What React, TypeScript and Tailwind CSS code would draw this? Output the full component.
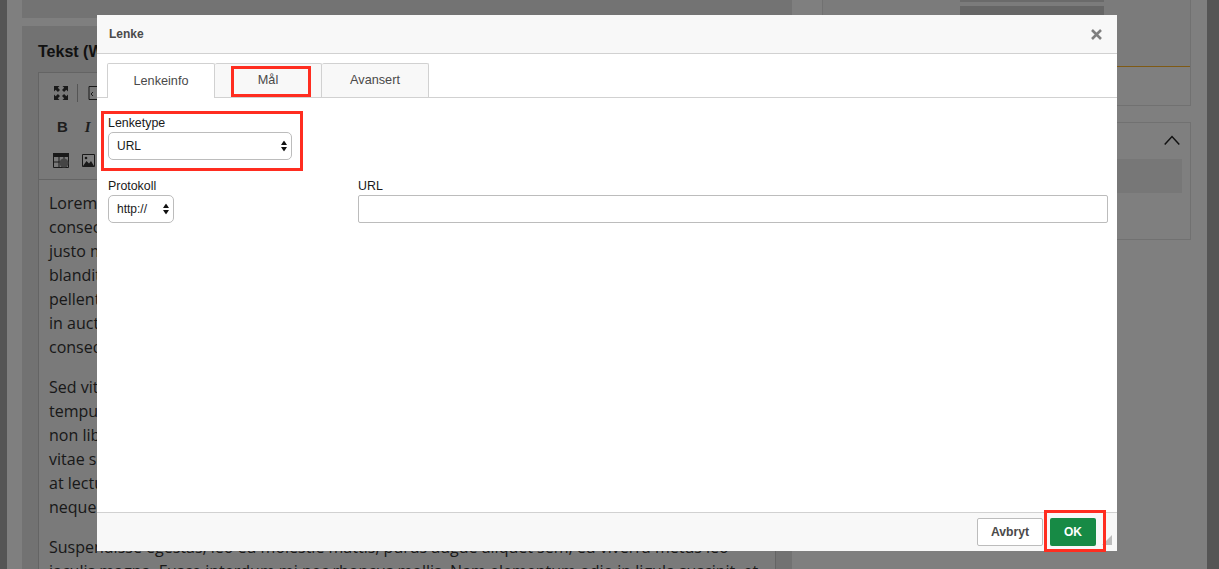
const dialogFont = "font-['Liberation_Sans',Arial,sans-serif]";

function Updown() {
  return (
    <svg width="6" height="11" viewBox="0 0 6 11" className="absolute right-[4px] top-1/2 -translate-y-1/2" fill="#111">
      <path d="M3 0 L6 4.5 H0 Z" />
      <path d="M3 11 L6 6.5 H0 Z" />
    </svg>
  );
}

function SelectBox({ text, className }: { text: string; className: string }) {
  return (
    <div className={`relative h-[28px] bg-white border border-[#bcbcbc] rounded-[5px] flex items-center pl-[8px] text-[12px] text-[#1a1a1a] pr-[8px] ${className}`}>
      {text}
      <Updown />
    </div>
  );
}

export default function App() {
  return (
    <div className="relative w-[1219px] h-[569px] overflow-hidden bg-white flex">
      <div className="w-[7px] h-full bg-[#aaaaaa]" />
      <div className="flex-1 min-w-0 pl-[15px] flex gap-[30px]">
        <div className="w-[770px] shrink-0 flex flex-col">
          <div className="h-[18px] bg-[#e6e6e6] shrink-0" />
          <div className="mt-[8px] flex-1 bg-[#e4e4e4] pl-[16px] pr-[16px] pt-[16px] min-h-0">
            <h2 className={`text-[16px] font-bold leading-[20px] text-[#222] ${dialogFont}`}>Tekst (WYSIWYG)</h2>
            <div className="mt-[10px] border border-[#c8c8c8] bg-[#f4f4f4] h-[600px]">
              <div className="h-[107px] bg-[#f2f2f2] border-b border-[#c8c8c8] pl-[15px] pt-[13px]">
                <div className="flex items-center h-[14px]">
                  <svg width="14" height="14" viewBox="0 0 14 14" fill="#333">
                    <path d="M0 0h5.5L3.8 1.7 6 3.9 3.9 6 1.7 3.8 0 5.5zM14 0v5.5l-1.7-1.7L10.1 6 8 3.9l2.2-2.2L8.5 0zM14 14H8.5l1.7-1.7L8 10.1 10.1 8l2.2 2.2 1.7-1.7zM0 14V8.5l1.7 1.7L3.9 8 6 10.1l-2.2 2.2L5.5 14z" />
                  </svg>
                  <span className="ml-[9px] w-px h-[18px] bg-[#aaa]" />
                  <svg width="14" height="14" viewBox="0 0 14 14" fill="none" stroke="#333" className="ml-[10px]">
                    <path d="M1 .5h8l4 4v9H1z" />
                    <path d="M5 6L3 8l2 2M9 6l2 2-2 2" />
                  </svg>
                </div>
                <div className="mt-[20px] flex items-center h-[14px] text-[#3c3c3c] font-['Liberation_Sans',sans-serif] text-[15px] font-bold">
                  <span className="ml-[3px]">B</span>
                  <span className="ml-[17px] font-['Liberation_Serif',serif] italic">I</span>
                </div>
                <div className="mt-[19px] flex items-start">
                  <svg width="16" height="15" viewBox="0 0 16 15" className="-ml-[1px]">
                    <rect x="0" y="0" width="16" height="4" fill="#333" />
                    <path d="M.5 4v10.5h15V4M.5 9h15M6 4v10.5M11 4v10.5" fill="none" stroke="#333" />
                    <circle cx="11" cy="10" r="4.5" fill="#8a8a8a" />
                  </svg>
                  <svg width="13" height="13" viewBox="0 0 13 13" className="ml-[13px] mt-[1px]">
                    <path d="M.5.5h12v12H.5z" fill="#fff" stroke="#333" />
                    <path d="M1 12l3.5-5 2.5 2.5L9 7l3 5z" fill="#333" />
                    <circle cx="4" cy="4" r="1.3" fill="#333" />
                  </svg>
                </div>
              </div>
              <div className="pl-[10px] pr-[12px] pt-[11px] font-['Open_Sans',sans-serif] text-[16px] leading-[24px] text-[#333]">
                <p className="mb-[8px]">Lorem ipsum dolor sit amet,<br />consectetur neque.<br />justo mauris.<br />blandit nulla.<br />pellentesque habitant.<br />in auctor fames.<br />consequat mattis.</p>
                <p className="mb-[8px] pt-[8px]">Sed vitae nibh.<br />tempus lorem.<br />non libero.<br />vitae sem.<br />at lectus.<br />neque porttitor.</p>
                <p className="pt-[8px]">Suspendisse egestas, leo eu molestie mattis, purus augue aliquet sem, eu viverra metus leo<br />iaculis magna. Fusce interdum mi nec rhoncus mollis. Nam elementum odio in ligula suscipit, et</p>
              </div>
            </div>
          </div>
        </div>
        <div className="w-[369px] shrink-0 flex flex-col">
          <div className="h-[106px] border border-[#e2e2e2] border-t-0 flex flex-col">
            <div className="flex-1 bg-[#f6f6f6] border-b border-[#ffb428] pl-[137px]">
              <div className="w-[144px] h-[2px] bg-[#d4d4d4]" />
              <div className="w-[144px] h-[9px] mt-[4px] bg-[#cccccc]" />
            </div>
            <div className="h-[38px]" />
          </div>
          <div className="mt-[16px] h-[118px] border border-[#e2e2e2] px-[8px] pt-[36px] relative">
            <svg width="16" height="10" viewBox="0 0 16 10" className="absolute right-[10px] top-[12px]" fill="none" stroke="#222" strokeWidth="1.5"><path d="M.7 9.5L8 1.5l7.3 8" /></svg>
            <div className="h-[34px] bg-[#eeeeee]" />
          </div>
        </div>
      </div>
      <div className="w-[12px] h-full bg-[#aaaaaa] shrink-0" />

      <div className="absolute inset-0 bg-black/50" />

      <div className={`absolute left-[97px] top-[15px] w-[1020px] h-[536px] bg-white flex flex-col ${dialogFont}`}>
        <div className="h-[39px] shrink-0 bg-[#f8f8f8] border-b border-[#d1d1d1] flex items-center justify-between pl-[12px] pr-[15px]">
          <span className="text-[12px] font-bold text-[#4a4a4a]">Lenke</span>
          <svg width="11" height="11" viewBox="0 0 11 11" stroke="#7f7f7f" strokeWidth="2.6"><path d="M1 1l9 9M10 1l-9 9" /></svg>
        </div>
        <div className="h-[44px] shrink-0 border-b border-[#d1d1d1] pl-[10px] pt-[9px] flex text-[12.7px] text-[#4a4a4a]">
          <div className="w-[108px] h-[35px] pt-[1px] bg-white border border-[#d1d1d1] border-b-0 rounded-t-[2px] flex items-center justify-center relative z-10">Lenkeinfo</div>
          <div className="w-[107px] h-[34px] pt-[1px] bg-[#f8f8f8] border border-[#d1d1d1] border-b-0 border-l-0 rounded-t-[2px] flex items-center justify-center relative">
            Mål
            <span className="absolute left-[16px] top-[2px] w-[80px] h-[31px] border-[3px] border-[#ff2d20]" />
          </div>
          <div className="w-[107px] h-[34px] pt-[1px] bg-[#f8f8f8] border border-[#d1d1d1] border-b-0 border-l-0 rounded-t-[2px] flex items-center justify-center">Avansert</div>
        </div>
        <div className="flex-1 pt-[17px] pl-[11px] pr-[9px] text-[12.4px] text-[#1a1a1a]">
          <div className="relative w-[184px]">
            <span className="absolute left-[-7px] top-[-4px] w-[202px] h-[60px] border-[3px] border-[#ff2d20] pointer-events-none" />
            <div className="leading-[16px]">Lenketype</div>
            <SelectBox text="URL" className="w-[184px] mt-[1px]" />
          </div>
          <div className="mt-[18px] flex gap-[184px]">
            <div className="w-[66px]">
              <div className="leading-[16px]">Protokoll</div>
              <SelectBox text="http://" className="w-[66px] mt-[1px]" />
            </div>
            <div className="flex-1">
              <div className="leading-[16px]">URL</div>
              <div className="h-[28px] mt-[1px] bg-white border border-[#bcbcbc] rounded-[2px]" />
            </div>
          </div>
        </div>
        <div className="h-[39px] shrink-0 bg-[#f8f8f8] border-t border-[#d1d1d1] flex items-start justify-end pt-[5px] pr-[21px] gap-[7px] relative">
          <svg width="10" height="10" viewBox="0 0 10 10" className="absolute right-[5px] bottom-[6px]" fill="#bdbdbd"><path d="M10 0V10H0Z" /></svg>
          <div className="w-[66px] h-[28px] bg-white border border-[#bcbcbc] rounded-[2px] flex items-center justify-center text-[12.2px] font-bold text-[#4a4a4a]">Avbryt</div>
          <div className="relative w-[46px] h-[28px] bg-[#178a45] rounded-[2px] flex items-center justify-center text-[12px] font-bold text-white">
            OK
            <span className="absolute left-[-6px] top-[-8px] w-[62px] h-[42px] border-[3px] border-[#ff2d20]" />
          </div>
        </div>
      </div>
    </div>
  );
}
